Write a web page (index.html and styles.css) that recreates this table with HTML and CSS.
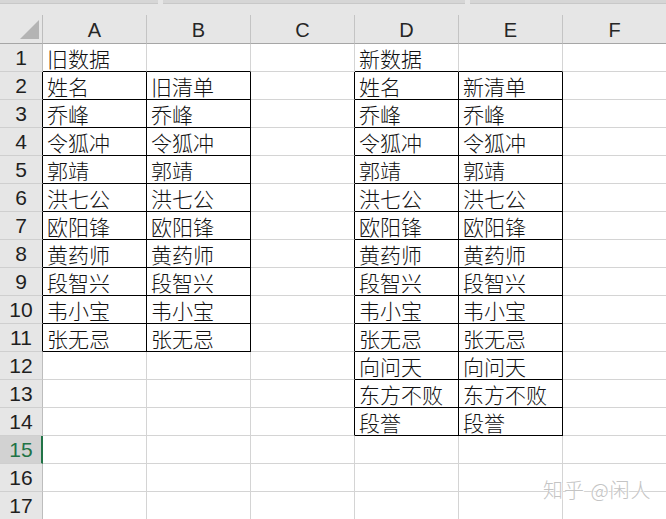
FILE: index.html
```html
<!DOCTYPE html>
<html lang="zh">
<head>
<meta charset="utf-8">
<link rel="stylesheet" href="styles.css">
</head>
<body>
<div class="sheet">
  <div class="topbar"><span class="seg s1"></span><span class="seg s2"></span><span class="seg s3"></span></div>
  <div class="grid">
    <div class="corner"><svg width="22" height="22" viewBox="0 0 22 22"><polygon points="21,2 21,21 2,21" fill="#b4b4b4"/></svg></div>
    <div class="ch">A</div><div class="ch">B</div><div class="ch">C</div><div class="ch">D</div><div class="ch">E</div><div class="ch">F</div>

    <div class="rh">1</div><div class="c kb">旧数据</div><div class="c kb"></div><div class="c"></div><div class="c kb">新数据</div><div class="c kb"></div><div class="c"></div>
    <div class="rh kr">2</div><div class="c kb kr">姓名</div><div class="c kb kr">旧清单</div><div class="c kr"></div><div class="c kb kr">姓名</div><div class="c kb kr">新清单</div><div class="c"></div>
    <div class="rh kr">3</div><div class="c kb kr">乔峰</div><div class="c kb kr">乔峰</div><div class="c kr"></div><div class="c kb kr">乔峰</div><div class="c kb kr">乔峰</div><div class="c"></div>
    <div class="rh kr">4</div><div class="c kb kr">令狐冲</div><div class="c kb kr">令狐冲</div><div class="c kr"></div><div class="c kb kr">令狐冲</div><div class="c kb kr">令狐冲</div><div class="c"></div>
    <div class="rh kr">5</div><div class="c kb kr">郭靖</div><div class="c kb kr">郭靖</div><div class="c kr"></div><div class="c kb kr">郭靖</div><div class="c kb kr">郭靖</div><div class="c"></div>
    <div class="rh kr">6</div><div class="c kb kr">洪七公</div><div class="c kb kr">洪七公</div><div class="c kr"></div><div class="c kb kr">洪七公</div><div class="c kb kr">洪七公</div><div class="c"></div>
    <div class="rh kr">7</div><div class="c kb kr">欧阳锋</div><div class="c kb kr">欧阳锋</div><div class="c kr"></div><div class="c kb kr">欧阳锋</div><div class="c kb kr">欧阳锋</div><div class="c"></div>
    <div class="rh kr">8</div><div class="c kb kr">黄药师</div><div class="c kb kr">黄药师</div><div class="c kr"></div><div class="c kb kr">黄药师</div><div class="c kb kr">黄药师</div><div class="c"></div>
    <div class="rh kr">9</div><div class="c kb kr">段智兴</div><div class="c kb kr">段智兴</div><div class="c kr"></div><div class="c kb kr">段智兴</div><div class="c kb kr">段智兴</div><div class="c"></div>
    <div class="rh kr">10</div><div class="c kb kr">韦小宝</div><div class="c kb kr">韦小宝</div><div class="c kr"></div><div class="c kb kr">韦小宝</div><div class="c kb kr">韦小宝</div><div class="c"></div>
    <div class="rh kr">11</div><div class="c kb kr">张无忌</div><div class="c kb kr">张无忌</div><div class="c kr"></div><div class="c kb kr">张无忌</div><div class="c kb kr">张无忌</div><div class="c"></div>
    <div class="rh">12</div><div class="c"></div><div class="c"></div><div class="c kr"></div><div class="c kb kr">向问天</div><div class="c kb kr">向问天</div><div class="c"></div>
    <div class="rh">13</div><div class="c"></div><div class="c"></div><div class="c kr"></div><div class="c kb kr">东方不败</div><div class="c kb kr">东方不败</div><div class="c"></div>
    <div class="rh">14</div><div class="c"></div><div class="c"></div><div class="c kr"></div><div class="c kb kr">段誉</div><div class="c kb kr">段誉</div><div class="c"></div>
    <div class="rh sel">15</div><div class="c"></div><div class="c"></div><div class="c"></div><div class="c"></div><div class="c"></div><div class="c"></div>
    <div class="rh">16</div><div class="c"></div><div class="c"></div><div class="c"></div><div class="c"></div><div class="c"></div><div class="c"></div>
    <div class="rh">17</div><div class="c"></div><div class="c"></div><div class="c"></div><div class="c"></div><div class="c"></div><div class="c"></div>
  </div>
  <div class="watermark">知乎 @闲人</div>
</div>
</body>
</html>
```

FILE: styles.css
```css
html, body {
  margin: 0;
  padding: 0;
  background: #ffffff;
  overflow: hidden;
}

.sheet {
  position: relative;
  width: 666px;
  height: 519px;
  overflow: hidden;
  background: #e6e6e6;
}

.topbar {
  height: 15px;
  background: #e6e6e6;
  display: flex;
  align-items: flex-start;
}

.seg {
  display: block;
  height: 3px;
  background: #d6d6d6;
  border-bottom: 1px solid #c8c8c8;
}
.s1 { width: 158px; margin-right: 5px; }
.s2 { width: 302px; margin-right: 5px; }
.s3 { flex: 1; }

.grid {
  display: grid;
  grid-template-columns: 43px repeat(6, 104px);
  grid-template-rows: 29px repeat(17, 28px);
  width: 667px;
  background: #ffffff;
}

.grid > div {
  box-sizing: border-box;
}

.corner {
  background: #e6e6e6;
  border-right: 1px solid #bdbdbd;
  border-bottom: 1px solid #a6a6a6;
  display: flex;
  align-items: flex-end;
  justify-content: flex-end;
  padding: 0 2px 3px 0;
}

.ch {
  background: #e6e6e6;
  border-right: 1px solid #c4c4c4;
  border-bottom: 1px solid #a6a6a6;
  font-family: "Liberation Sans", Arial, sans-serif;
  font-size: 20px;
  color: #262626;
  display: flex;
  align-items: center;
  justify-content: center;
  padding-top: 2px;
}

.rh {
  background: #e6e6e6;
  border-right: 1px solid #bdbdbd;
  border-bottom: 1px solid #cfcfcf;
  font-family: "Liberation Sans", Arial, sans-serif;
  font-size: 21px;
  color: #1f1f1f;
  display: flex;
  align-items: center;
  justify-content: center;
}

.rh.sel {
  background: #d2d2d2;
  color: #217346;
  border-right: 2px solid #217346;
  padding-left: 1px;
}

.c {
  border-right: 1px solid #d4d4d4;
  border-bottom: 1px solid #d4d4d4;
  font-family: "Noto Sans CJK SC", "Noto Sans", sans-serif;
  font-weight: 300;
  font-size: 21px;
  color: #111111;
  display: flex;
  align-items: center;
  padding-left: 4px;
  white-space: nowrap;
  overflow: hidden;
}

.grid > .kb { border-bottom-color: #000000; }
.grid > .kr { border-right-color: #000000; }

.watermark {
  position: absolute;
  left: 543px;
  top: 475px;
  font-family: "Noto Sans CJK SC", sans-serif;
  font-weight: 300;
  font-size: 20px;
  color: #c4c4c4;
  letter-spacing: 1px;
  text-shadow: 0 0 1px #ffffff, 1px 1px 0 #ffffff;
  white-space: nowrap;
}
```
